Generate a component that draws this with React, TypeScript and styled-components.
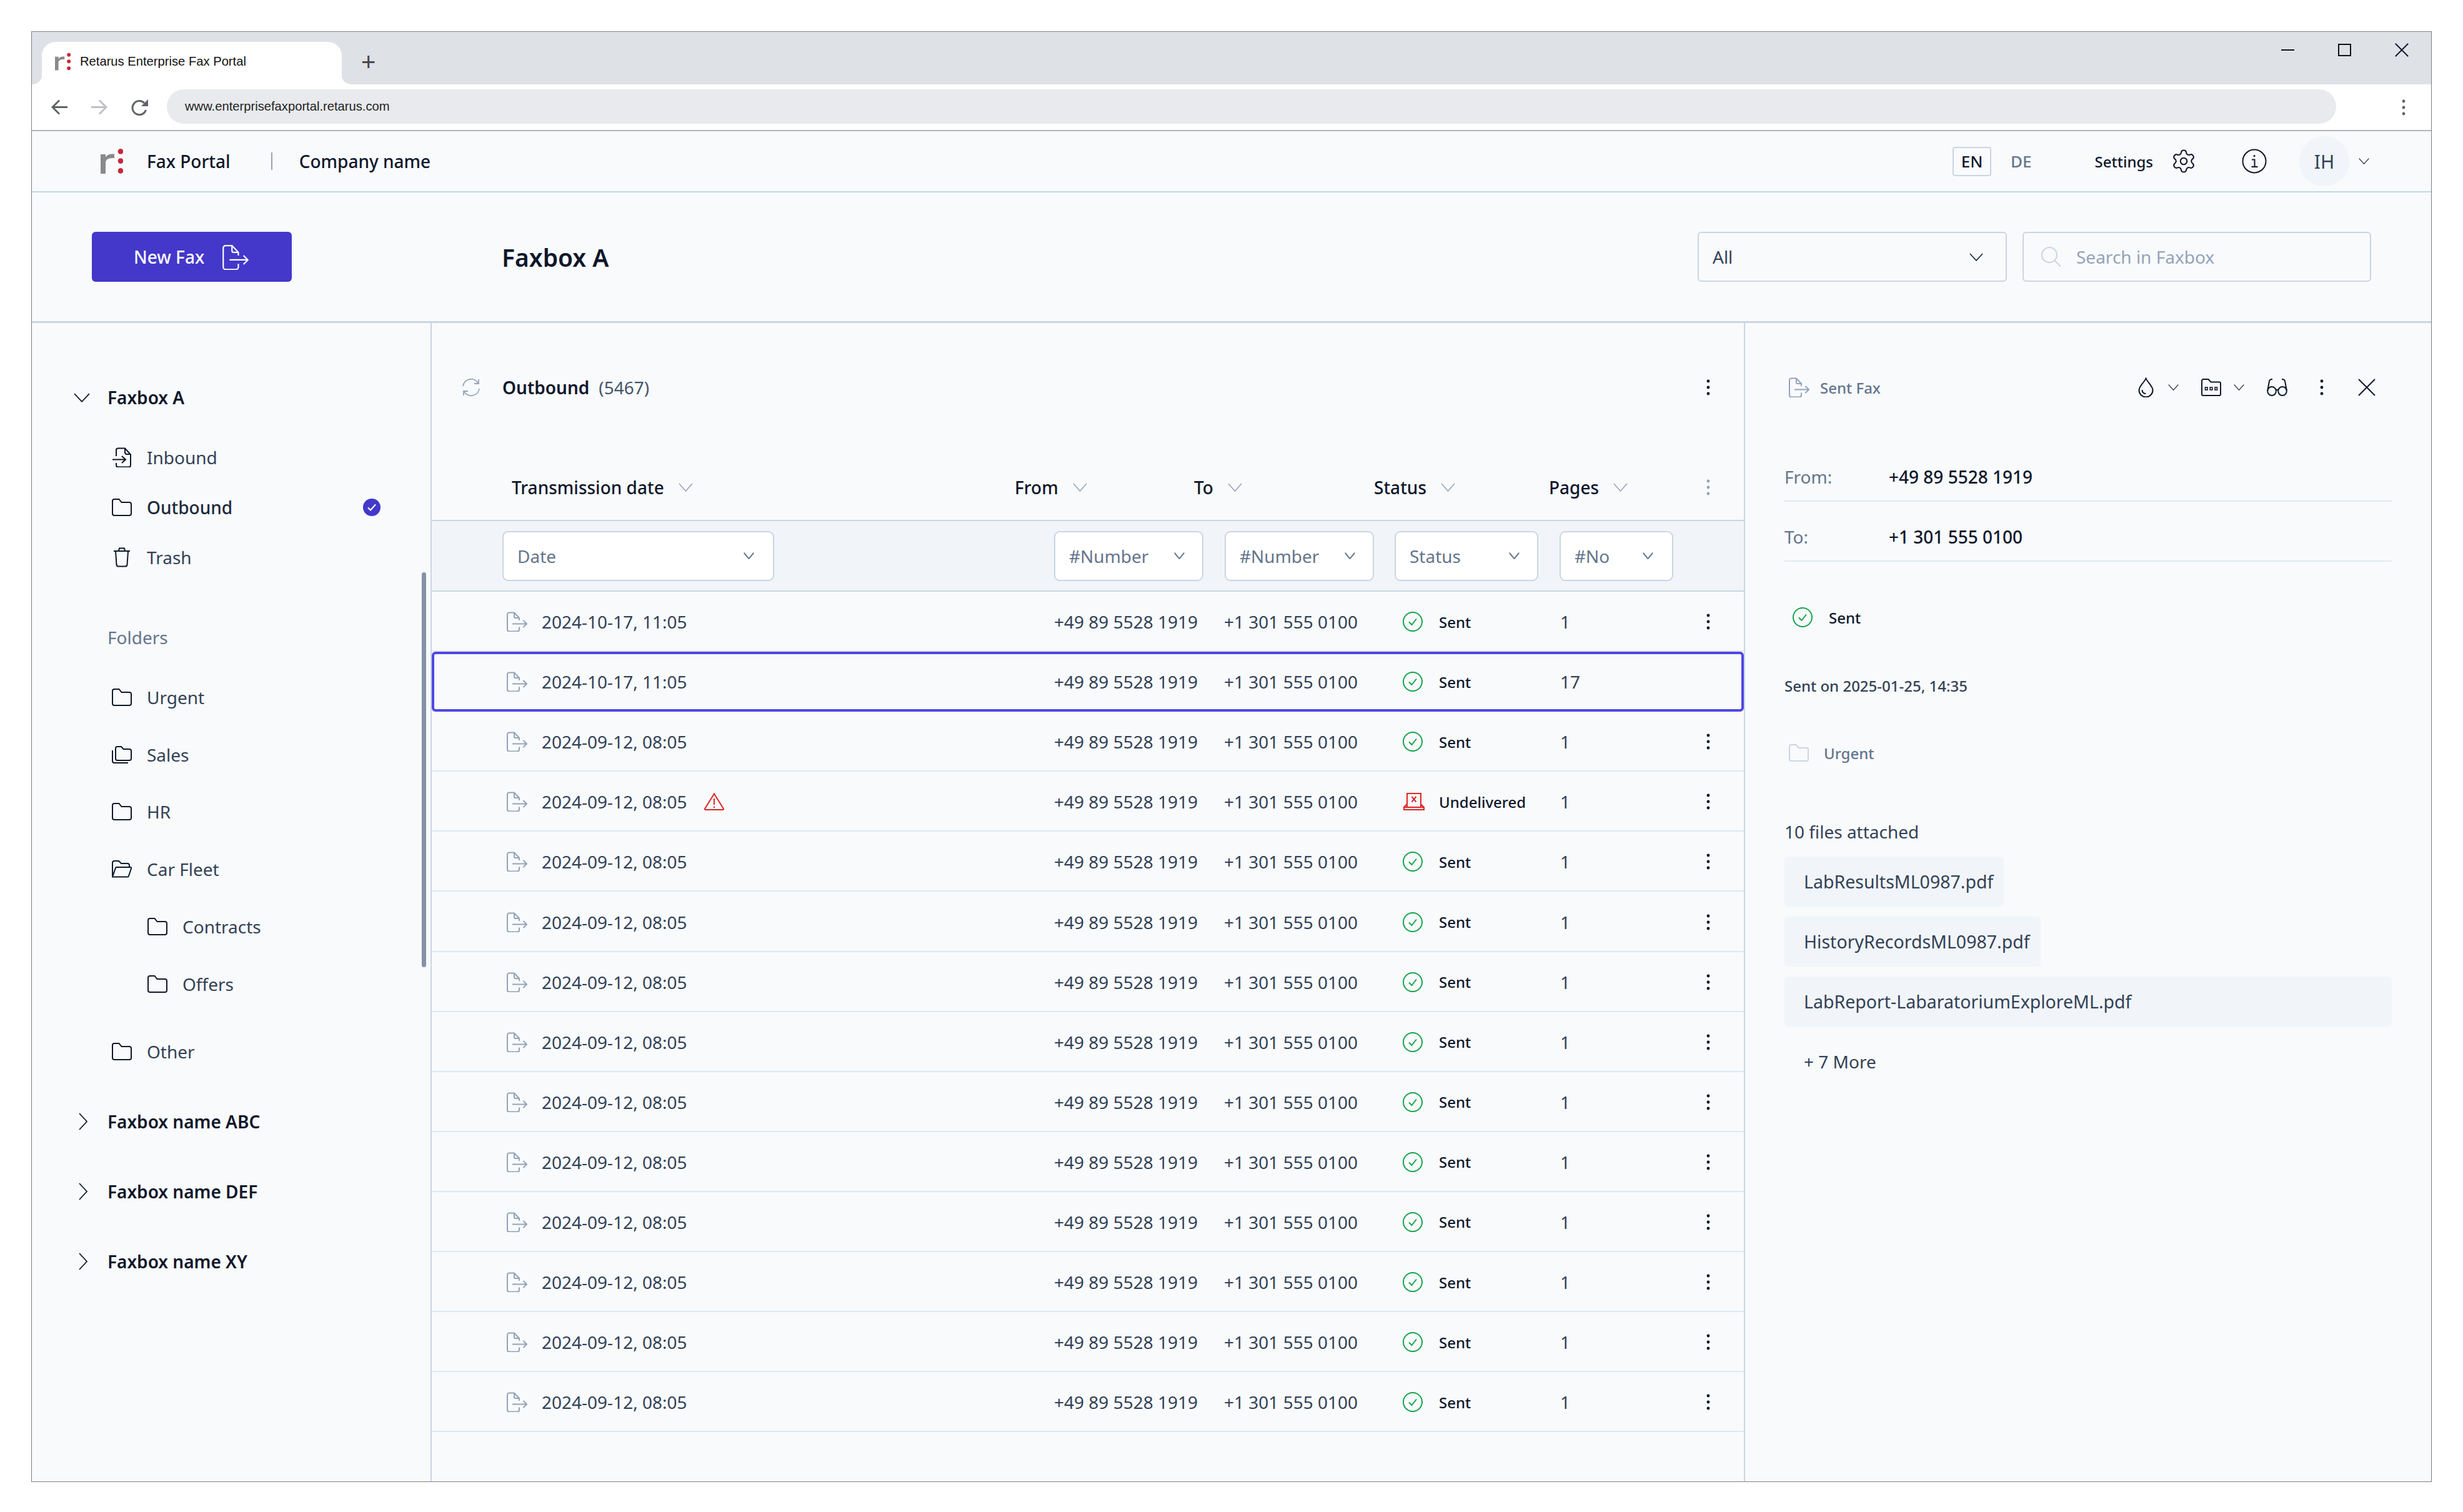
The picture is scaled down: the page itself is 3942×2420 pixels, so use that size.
import React from 'react'
import styled, { createGlobalStyle } from 'styled-components'
import { Settings } from 'lucide-react'

const GlobalStyle = createGlobalStyle`
  html, body { margin: 0; padding: 0; background: #fff; }
  body { font-family: "Noto Sans", sans-serif; color: #334155; }
  * { box-sizing: border-box; }
`

const INK = '#0f172a'
const SLATE = '#94a3b8'

type IconProps = { c?: string; w?: number; h?: number }

const Logo = ({ w = 36, h = 40 }: IconProps) => (
  <svg width={w} height={h} viewBox="0 0 36 40">
    <path d="M0 40V9h8v5c2-4 6-6 14-5.5V15c-8-.5-14 1-14 8v17z" fill="#8a8a8a" />
    <circle cx="32" cy="4.4" r="4.3" fill="#c8283c" />
    <circle cx="32" cy="19.6" r="4.3" fill="#c8283c" />
    <circle cx="32" cy="35.4" r="4.3" fill="#c8283c" />
  </svg>
)

const Chevron = ({ c = INK, w = 24, h = 14, s = 1.6 }: IconProps & { s?: number }) => (
  <svg width={w} height={h} viewBox="0 0 24 14" fill="none" stroke={c} strokeWidth={s} preserveAspectRatio="none">
    <path d="M1 1l11 12L23 1" />
  </svg>
)

const ChevronRight = () => (
  <svg width="16" height="28" viewBox="0 0 16 28" fill="none" stroke={INK} strokeWidth="1.8">
    <path d="M2 1l12 13L2 27" />
  </svg>
)

const SentDoc = ({ c = SLATE, w = 33, h = 32 }: IconProps) => (
  <svg width={w} height={h} viewBox="0 0 33 32" fill="none" stroke={c} strokeWidth="2">
    <path d="M20 14v-4L12 1.5H4a3 3 0 0 0-3 3v24a3 3 0 0 0 3 3h13a3 3 0 0 0 3-3v-4" />
    <path d="M12 1.5V8a2 2 0 0 0 2 2h6" />
    <path d="M9 19.5h23M26.5 14l5.5 5.5-5.5 5.5" />
  </svg>
)

const InboundDoc = () => (
  <svg width="32" height="32" viewBox="0 0 32 32" fill="none" stroke={INK} strokeWidth="2">
    <path d="M7 14V4.5a3 3 0 0 1 3-3h11l9 10v17a3 3 0 0 1-3 3H10a3 3 0 0 1-3-3V25" />
    <path d="M21 1.5V8a3 3 0 0 0 3 3h6" />
    <path d="M1 19.5h21M16 14l6 5.5-6 5.5" />
  </svg>
)

const Folder = ({ c = INK }: IconProps) => (
  <svg width="32" height="28" viewBox="0 0 32 28" fill="none" stroke={c} strokeWidth="2">
    <path d="M1 4a3 3 0 0 1 3-3h7.5l4 5H28a3 3 0 0 1 3 3v15a3 3 0 0 1-3 3H4a3 3 0 0 1-3-3z" />
  </svg>
)

const FolderStack = () => (
  <svg width="32" height="28" viewBox="0 0 32 28" fill="none" stroke={INK} strokeWidth="2">
    <path d="M6 4a3 3 0 0 1 3-3h6l3.5 4H28a3 3 0 0 1 3 3v12a3 3 0 0 1-3 3H9a3 3 0 0 1-3-3z" />
    <path d="M1 7v17a3 3 0 0 0 3 3h22" />
  </svg>
)

const FolderOpen = () => (
  <svg width="32" height="28" viewBox="0 0 32 28" fill="none" stroke={INK} strokeWidth="2">
    <path d="M1 25V4a3 3 0 0 1 3-3h7l4 4h10a3 3 0 0 1 3 3v3" />
    <path d="M1 26.5 6 12a1.5 1.5 0 0 1 1.5-1H30a1.2 1.2 0 0 1 1.2 1.6L27 25a2 2 0 0 1-2 1.5z" />
  </svg>
)

const Trash = () => (
  <svg width="28" height="32" viewBox="0 0 28 32" fill="none" stroke={INK} strokeWidth="2">
    <path d="M1 6h26M9 5.5 10 1.5h8l1 4" />
    <path d="M4 6l1.5 22a3 3 0 0 0 3 2.5h11a3 3 0 0 0 3-2.5L24 6" />
  </svg>
)

const CheckBadge = () => (
  <svg width="28" height="28" viewBox="0 0 28 28" fill="none">
    <circle cx="14" cy="14" r="14" fill="#4338ca" />
    <path d="M8 14.5l4 4 8-9" stroke="#fff" strokeWidth="2.2" />
  </svg>
)

const SentIcon = () => (
  <svg width="32" height="32" viewBox="0 0 32 32" fill="none" stroke="#16a34a" strokeWidth="2">
    <circle cx="16" cy="16" r="15" />
    <path d="M10 16.5l4.5 4.5L22 11.5" />
  </svg>
)

const FailIcon = () => (
  <svg width="36" height="28" viewBox="0 0 36 28" fill="none" stroke="#dc2626" strokeWidth="2">
    <path d="M7 23V1h22v22" />
    <path d="M7 18l-5 5v4h32v-4l-5-5" />
    <path d="M2 23h32" />
    <path d="M14.5 6l7 8.5M21.5 6l-7 8.5" />
  </svg>
)

const Warning = () => (
  <svg width="32" height="28" viewBox="0 0 32 28" fill="none" stroke="#dc2626" strokeWidth="2">
    <path d="M16 1.5 31 25.5a1 1 0 0 1-1 1.5H2a1 1 0 0 1-1-1.5z" />
    <path d="M16 9v10M16 21.5v2.5" />
  </svg>
)

const Kebab = ({ c = INK }: IconProps) => (
  <svg width="6" height="26" viewBox="0 0 6 26" fill={c}>
    <circle cx="3" cy="3" r="2.4" />
    <circle cx="3" cy="13" r="2.4" />
    <circle cx="3" cy="23" r="2.4" />
  </svg>
)

const Refresh = () => (
  <svg width="30" height="30" viewBox="0 0 30 30" fill="none" stroke={SLATE} strokeWidth="1.8">
    <path d="M2 13A13 13 0 0 1 26 8" />
    <path d="M27 2v7h-7" />
    <path d="M28 17A13 13 0 0 1 4 22" />
    <path d="M3 28v-7h7" />
  </svg>
)

const NewFaxIcon = () => (
  <svg width="42" height="41" viewBox="0 0 33 32" fill="none" stroke="#fff" strokeWidth="1.7">
    <path d="M20 14v-4L12 1.5H4a3 3 0 0 0-3 3v24a3 3 0 0 0 3 3h13a3 3 0 0 0 3-3v-4" />
    <path d="M12 1.5V8a2 2 0 0 0 2 2h6" />
    <path d="M9 19.5h23M26.5 14l5.5 5.5-5.5 5.5" />
  </svg>
)

const InfoIcon = () => (
  <svg width="40" height="40" viewBox="0 0 40 40" fill="none" stroke={INK} strokeWidth="2">
    <circle cx="20" cy="20" r="18.5" />
    <path d="M16 17.5h4.5V29M15.5 29h10" />
    <circle cx="20" cy="11.5" r="1.6" fill={INK} stroke="none" />
  </svg>
)

const SearchIcon = () => (
  <svg width="32" height="32" viewBox="0 0 32 32" fill="none" stroke="#cbd5e1" strokeWidth="2">
    <circle cx="13" cy="13" r="12" />
    <path d="M21.5 22 31 31.5" />
  </svg>
)

const Drop = () => (
  <svg width="25" height="32" viewBox="0 0 25 32" fill="none" stroke={INK} strokeWidth="2">
    <path d="M12.5 1.5C10 8 1.5 14 1.5 20.5a11 11 0 0 0 22 0C23.5 14 15 8 12.5 1.5z" />
    <path d="M6.5 20c0 4 2.5 6 6 6" />
  </svg>
)

const FolderDots = () => (
  <svg width="32" height="28" viewBox="0 0 32 28" fill="none" stroke={INK} strokeWidth="2">
    <path d="M1 3.5A2.5 2.5 0 0 1 3.500 1h8l4 4.500H29a2 2 0 0 1 2 2V25a2 2 0 0 1-2 2H3a2 2 0 0 1-2-2z" />
    <rect x="6.5" y="14" width="3.5" height="4" strokeWidth="1.6" />
    <rect x="14.2" y="14" width="3.5" height="4" strokeWidth="1.6" />
    <rect x="22" y="14" width="3.5" height="4" strokeWidth="1.6" />
  </svg>
)

const Glasses = () => (
  <svg width="33" height="28" viewBox="0 0 33 28" fill="none" stroke={INK} strokeWidth="2">
    <ellipse cx="8" cy="20" rx="6.8" ry="7" />
    <ellipse cx="25" cy="20" rx="6.8" ry="7" />
    <path d="M14.5 18.5c1.500-1 2.500-1 4 0" />
    <path d="M1.2 19 4 4c.3-2 2-3 5-3" />
    <path d="M31.8 19 29 4c-.3-2-2-3-5-3" />
  </svg>
)

const CloseX = ({ w = 28, h = 28, s = 2 }: IconProps & { s?: number }) => (
  <svg width={w} height={h} viewBox="0 0 28 28" fill="none" stroke={INK} strokeWidth={s}>
    <path d="M1 1l26 26M27 1 1 27" />
  </svg>
)

const ArrowBack = ({ c = '#5f6368', flip = false }: IconProps & { flip?: boolean }) => (
  <svg width="26" height="25" viewBox="0 0 26 25" fill="none" stroke={c} strokeWidth="3" style={flip ? { transform: 'scaleX(-1)' } : undefined}>
    <path d="M26 12.5H3M13 1.5 2 12.5l11 11" />
  </svg>
)

const Reload = () => (
  <svg width="28" height="26" viewBox="0 0 28 26" fill="none">
    <path d="M23.5 17A11 11 0 1 1 21 6" stroke="#5f6368" strokeWidth="3" />
    <path d="M27 0v11H16z" fill="#5f6368" />
  </svg>
)

const Page = styled.div`
  width: 3942px;
  height: 2420px;
  padding: 50px 50px 48px;
`

const BrowserWindow = styled.div`
  height: 100%;
  display: flex;
  flex-direction: column;
  border: 1px solid #808080;
  background: #f8fafc;
  overflow: hidden;
`

const TabStrip = styled.div`
  height: 84px;
  flex: none;
  display: flex;
  align-items: flex-end;
  padding-left: 16px;
  background: #dee1e6;
`

const Tab = styled.div`
  position: relative;
  width: 480px;
  height: 68px;
  display: flex;
  align-items: center;
  gap: 15px;
  padding: 0 0 6px 21px;
  background: #fff;
  border-radius: 22px 22px 0 0;
  font: 400 20.2px "Liberation Sans", sans-serif;
  color: #111;

  &::before, &::after {
    content: "";
    position: absolute;
    bottom: 0;
    width: 16px;
    height: 16px;
    background: #fff;
  }
  &::before { left: -15px; -webkit-mask: radial-gradient(circle at 0 0, transparent 15.5px, #000 16px); }
  &::after { right: -15px; -webkit-mask: radial-gradient(circle at 100% 0, transparent 15.5px, #000 16px); }
`

const NewTab = styled.div`
  margin: 12px 0 0 31px;
  align-self: center;
  font: 400 40px "Liberation Sans", sans-serif;
  line-height: 40px;
  color: #45484d;
`

const WindowButtons = styled.div`
  margin-left: auto;
  align-self: flex-start;
  height: 57px;
  display: flex;
  align-items: center;
  gap: 70px;
  padding-right: 36px;
`

const MinimizeBar = styled.span`
  width: 21px;
  height: 2px;
  background: #111;
`

const MaximizeBox = styled.span`
  width: 21px;
  height: 20px;
  border: 2px solid #111;
`

const AddressRow = styled.div`
  height: 75px;
  flex: none;
  display: flex;
  align-items: center;
  padding: 0 41px 0 31px;
  background: #fff;
  border-bottom: 2px solid #b5b5b5;
`

const NavIcons = styled.div`
  display: flex;
  align-items: center;
  gap: 38px;
  width: 185px;
`

const UrlPill = styled.div`
  flex: 1;
  height: 55px;
  margin-bottom: 2px;
  display: flex;
  align-items: center;
  padding-left: 29px;
  border-radius: 28px;
  background: #e8eaed;
  font: 400 20.2px "Liberation Sans", sans-serif;
  color: #222;
`

const BrowserMenu = styled.div`
  margin-left: 105px;
  display: flex;
`

const AppHeader = styled.header`
  height: 98px;
  flex: none;
  display: flex;
  align-items: center;
  padding: 0 99px 0 110px;
  border-bottom: 2px solid #cbd5e1;
`

const Brand = styled.div`
  display: flex;
  align-items: center;
  font-size: 28px;
  font-weight: 500;
  color: ${INK};
`

const BrandName = styled.span`
  margin-left: 38px;
`

const BrandRule = styled.span`
  width: 2px;
  height: 28px;
  margin: 0 43px 0 65px;
  background: #94a3b8;
`

const HeaderTools = styled.div`
  margin-left: auto;
  display: flex;
  align-items: center;
`

const LangOn = styled.span`
  width: 62px;
  height: 47px;
  display: flex;
  align-items: center;
  justify-content: center;
  border: 2px solid #cbd5e1;
  border-radius: 4px;
  font-size: 26px;
  font-weight: 500;
  color: ${INK};
`

const LangOff = styled.span`
  margin: 0 101px 0 31px;
  font-size: 26px;
  font-weight: 500;
  color: #64748b;
`

const SettingsLabel = styled.span`
  margin-right: 28px;
  font-size: 24px;
  font-weight: 500;
  color: ${INK};
`

const InfoWrap = styled.span`
  display: flex;
  margin: 0 52px 0 72px;
`

const Avatar = styled.span`
  width: 80px;
  height: 80px;
  display: flex;
  align-items: center;
  justify-content: center;
  border-radius: 50%;
  background: #f1f5f9;
  font-size: 30px;
  color: #334155;
`

const AvatarCaret = styled.span`
  display: flex;
  margin-left: 15px;
`

const Toolbar = styled.div`
  height: 209px;
  flex: none;
  display: flex;
  align-items: center;
  padding: 0 96px 0 96px;
  border-bottom: 3px solid #cbd5e1;
`

const NewFaxButton = styled.button`
  width: 320px;
  height: 80px;
  display: flex;
  align-items: center;
  gap: 29px;
  padding: 0 0 0 67px;
  border: none;
  border-radius: 6px;
  background: #4338ca;
  color: #fff;
  font: 500 28px "Noto Sans", sans-serif;
`

const PageTitle = styled.h1`
  margin: 0 0 0 336px;
  font-size: 39px;
  font-weight: 600;
  color: ${INK};
`

const Field = styled.div<{ $w: number }>`
  width: ${p => p.$w}px;
  height: 80px;
  display: flex;
  align-items: center;
  border: 2px solid #cbd5e1;
  border-radius: 6px;
  font-size: 28px;
`

const SelectField = styled(Field)`
  margin-left: auto;
  justify-content: space-between;
  padding: 0 36px 0 22px;
  color: #334155;
`

const SearchField = styled(Field)`
  margin-left: 25px;
  gap: 24px;
  padding-left: 28px;
  color: #94a3b8;
`

const Body = styled.div`
  flex: 1;
  min-height: 0;
  display: flex;
`

const Sidebar = styled.aside`
  position: relative;
  width: 640px;
  flex: none;
  padding-top: 79px;
  border-right: 2px solid #cbd5e1;
`

const SideScroll = styled.span`
  position: absolute;
  top: 399px;
  right: 7px;
  width: 7px;
  height: 632px;
  border-radius: 4px;
  background: #8492a6;
`

const FaxboxRow = styled.div<{ $h: number }>`
  height: ${p => p.$h}px;
  display: flex;
  align-items: center;
  padding-left: 67px;
  font-size: 28px;
  font-weight: 600;
  color: ${INK};
`

const CaretSlot = styled.span<{ $inset?: number }>`
  width: 54px;
  display: flex;
  padding-left: ${p => p.$inset ?? 0}px;
`

const NavGroup = styled.div<{ $top: number }>`
  margin-top: ${p => p.$top}px;
`

const NavItem = styled.div<{ $h: number; $nest?: boolean; $active?: boolean }>`
  height: ${p => p.$h}px;
  display: flex;
  align-items: center;
  gap: 24px;
  padding-left: ${p => (p.$nest ? 185 : 128)}px;
  font-size: 28px;
  font-weight: ${p => (p.$active ? 500 : 400)};
  color: ${p => (p.$active ? '#1e293b' : '#334155')};
`

const NavBadge = styled.span`
  display: flex;
  margin-left: auto;
  margin-right: 80px;
`

const NavIconSlot = styled.span`
  width: 32px;
  display: flex;
  justify-content: center;
`

const FoldersLabel = styled.div`
  height: 80px;
  display: flex;
  align-items: center;
  margin-top: 48px;
  padding-left: 121px;
  font-size: 28px;
  color: #64748b;
`

const ListPanel = styled.main`
  width: 2102px;
  flex: none;
  border-right: 2px solid #cbd5e1;
`

const ListTitle = styled.div`
  height: 206px;
  display: flex;
  align-items: center;
  padding: 0 54px 0 48px;
  font-size: 28px;
`

const ListName = styled.span`
  margin-left: 35px;
  font-weight: 600;
  color: ${INK};
`

const ListCount = styled.span`
  margin-left: 15px;
  color: #475569;
`

const ListMenu = styled.span`
  display: flex;
  margin-left: auto;
`

const HeadRow = styled.div`
  height: 111px;
  display: grid;
  grid-template-columns: 805px 287px 288px 280px 1fr 6px;
  align-items: center;
  padding: 4px 54px 0 128px;
  border-bottom: 2px solid #cbd5e1;
`

const HeadCell = styled.div`
  display: flex;
  align-items: center;
  gap: 23px;
  font-size: 28px;
  font-weight: 500;
  color: ${INK};
`

const FilterRow = styled.div`
  height: 113px;
  display: grid;
  grid-template-columns: 883px 273px 272px 264px 182px;
  align-items: center;
  padding: 0 0 0 113px;
  background: #f1f5f9;
  border-bottom: 2px solid #cbd5e1;
`

const FilterBox = styled.div<{ $w: number; $pad: number }>`
  width: ${p => p.$w}px;
  height: 80px;
  display: flex;
  align-items: center;
  justify-content: space-between;
  padding: 0 ${p => p.$pad}px 0 22px;
  background: #fff;
  border: 2px solid #cbd5e1;
  border-radius: 9px;
  font-size: 28px;
  color: #64748b;
`

const Row = styled.div<{ $selected?: boolean }>`
  height: 96.1px;
  display: grid;
  grid-template-columns: 876px 272px 286px 252px 1fr 6px;
  align-items: center;
  padding: 2px 54px 0 120px;
  font-size: 28px;
  border-bottom: 2px solid #e2e8f0;
  ${p => p.$selected && `
    border: 4px solid #4f46e5;
    border-radius: 6px;
    padding: 0 50px 0 116px;
  `}
`

const DateCell = styled.div`
  display: flex;
  align-items: center;
  gap: 23px;
`

const DateAlert = styled.span`
  display: flex;
  margin-left: 4px;
`

const StatusCell = styled.div`
  display: flex;
  align-items: center;
  font-size: 24px;
  font-weight: 500;
  color: ${INK};
`

const StatusSlot = styled.span`
  width: 58px;
  display: flex;
`

const RowMenu = styled.span`
  display: flex;
`

const Detail = styled.section`
  flex: 1;
  min-width: 0;
  padding: 0 63px;
`

const DetailBar = styled.div`
  height: 190px;
  display: flex;
  align-items: center;
  padding: 16px 26px 0 7px;
`

const DetailKind = styled.span`
  display: flex;
  align-items: center;
  gap: 17px;
  font-size: 24px;
  font-weight: 500;
  color: #64748b;
`

const DetailTools = styled.div`
  margin-left: auto;
  display: flex;
  align-items: center;
`

const ToolChevron = styled.span<{ $left: number }>`
  display: flex;
  margin: 0 36px 0 ${p => p.$left}px;
`

const ToolKebab = styled.span`
  display: flex;
  margin: 0 55px 0 52px;
`

const InfoLine = styled.div`
  height: 96px;
  display: flex;
  align-items: center;
  padding-top: 18px;
  border-bottom: 2px solid #e2e8f0;
  font-size: 28px;
`

const InfoLabel = styled.span`
  width: 167px;
  color: #64748b;
`

const InfoValue = styled.span`
  font-weight: 500;
  color: ${INK};
`

const DetailStatus = styled.div`
  height: 178px;
  display: flex;
  align-items: center;
  gap: 26px;
  padding-left: 13px;
  font-size: 24px;
  font-weight: 500;
  color: ${INK};
`

const SentOn = styled.div`
  height: 40px;
  display: flex;
  align-items: center;
  font-size: 24px;
  font-weight: 500;
  color: #334155;
`

const TagLine = styled.div`
  height: 40px;
  margin-top: 68px;
  display: flex;
  align-items: center;
  gap: 24px;
  padding-left: 7px;
  font-size: 24px;
  font-weight: 500;
  color: #64748b;
`

const FilesLabel = styled.div`
  height: 40px;
  margin-top: 86px;
  display: flex;
  align-items: center;
  font-size: 28px;
  color: #334155;
`

const FileList = styled.div`
  margin-top: 20px;
  display: flex;
  flex-direction: column;
  align-items: flex-start;
  gap: 16px;
`

const FileChip = styled.div<{ $wide?: boolean }>`
  height: 80px;
  width: ${p => (p.$wide ? '100%' : 'auto')};
  display: flex;
  align-items: center;
  padding: 0 17px 0 31px;
  border-radius: 6px;
  background: #f1f5f9;
  font-size: 28.5px;
  color: #334155;
`

const MoreFiles = styled.div`
  height: 80px;
  display: flex;
  align-items: center;
  padding-left: 31px;
  font-size: 28px;
  color: #334155;
`

type FaxRow = {
  date: string
  pages: string
  failed?: boolean
  selected?: boolean
}

const rows: FaxRow[] = [
  { date: '2024-10-17, 11:05', pages: '1' },
  { date: '2024-10-17, 11:05', pages: '17', selected: true },
  { date: '2024-09-12, 08:05', pages: '1' },
  { date: '2024-09-12, 08:05', pages: '1', failed: true },
  ...Array.from({ length: 10 }, () => ({ date: '2024-09-12, 08:05', pages: '1' })),
]

const columns = ['Transmission date', 'From', 'To', 'Status', 'Pages']

const filters = [
  { label: 'Date', w: 435, pad: 30 },
  { label: '#Number', w: 239, pad: 28 },
  { label: '#Number', w: 239, pad: 28 },
  { label: 'Status', w: 230, pad: 28 },
  { label: '#No', w: 182, pad: 30 },
]

const folders = [
  { label: 'Urgent', icon: <Folder /> },
  { label: 'Sales', icon: <FolderStack /> },
  { label: 'HR', icon: <Folder /> },
  { label: 'Car Fleet', icon: <FolderOpen /> },
  { label: 'Contracts', icon: <Folder />, nest: true },
  { label: 'Offers', icon: <Folder />, nest: true },
]

const App = () => {
  return (
    <Page>
      <GlobalStyle />
      <BrowserWindow>
        <TabStrip>
          <Tab>
            <Logo w={25} h={29} />
            Retarus Enterprise Fax Portal
          </Tab>
          <NewTab>+</NewTab>
          <WindowButtons>
            <MinimizeBar />
            <MaximizeBox />
            <CloseX w={22} h={22} s={2.4} />
          </WindowButtons>
        </TabStrip>
        <AddressRow>
          <NavIcons>
            <ArrowBack />
            <ArrowBack c="#bdc1c6" flip />
            <Reload />
          </NavIcons>
          <UrlPill>www.enterprisefaxportal.retarus.com</UrlPill>
          <BrowserMenu>
            <Kebab c="#5f6368" />
          </BrowserMenu>
        </AddressRow>

        <AppHeader>
          <Brand>
            <Logo />
            <BrandName>Fax Portal</BrandName>
            <BrandRule />
            Company name
          </Brand>
          <HeaderTools>
            <LangOn>EN</LangOn>
            <LangOff>DE</LangOff>
            <SettingsLabel>Settings</SettingsLabel>
            <Settings size={42} strokeWidth={1.2} color={INK} />
            <InfoWrap>
              <InfoIcon />
            </InfoWrap>
            <Avatar>IH</Avatar>
            <AvatarCaret>
              <Chevron w={17} h={10} />
            </AvatarCaret>
          </HeaderTools>
        </AppHeader>

        <Toolbar>
          <NewFaxButton>
            New Fax
            <NewFaxIcon />
          </NewFaxButton>
          <PageTitle>Faxbox A</PageTitle>
          <SelectField $w={495}>
            All
            <Chevron w={22} h={13} />
          </SelectField>
          <SearchField $w={558}>
            <SearchIcon />
            Search in Faxbox
          </SearchField>
        </Toolbar>

        <Body>
          <Sidebar>
            <FaxboxRow $h={80}>
              <CaretSlot>
                <Chevron w={26} h={15} />
              </CaretSlot>
              Faxbox A
            </FaxboxRow>
            <NavGroup $top={16}>
              <NavItem $h={80}>
                <NavIconSlot><InboundDoc /></NavIconSlot>
                Inbound
              </NavItem>
              <NavItem $h={80} $active>
                <NavIconSlot><Folder /></NavIconSlot>
                Outbound
                <NavBadge><CheckBadge /></NavBadge>
              </NavItem>
              <NavItem $h={80}>
                <NavIconSlot><Trash /></NavIconSlot>
                Trash
              </NavItem>
            </NavGroup>
            <FoldersLabel>Folders</FoldersLabel>
            <NavGroup $top={10}>
              {folders.map(f => (
                <NavItem key={f.label} $h={91.8} $nest={f.nest}>
                  <NavIconSlot>{f.icon}</NavIconSlot>
                  {f.label}
                </NavItem>
              ))}
            </NavGroup>
            <NavGroup $top={16}>
              <NavItem $h={92}>
                <NavIconSlot><Folder /></NavIconSlot>
                Other
              </NavItem>
            </NavGroup>
            <NavGroup $top={10}>
              {['Faxbox name ABC', 'Faxbox name DEF', 'Faxbox name XY'].map(name => (
                <FaxboxRow key={name} $h={112}>
                  <CaretSlot $inset={7}><ChevronRight /></CaretSlot>
                  {name}
                </FaxboxRow>
              ))}
            </NavGroup>
            <SideScroll />
          </Sidebar>

          <ListPanel>
            <ListTitle>
              <Refresh />
              <ListName>Outbound</ListName>
              <ListCount>(5467)</ListCount>
              <ListMenu><Kebab /></ListMenu>
            </ListTitle>
            <HeadRow>
              {columns.map(label => (
                <HeadCell key={label}>
                  {label}
                  <Chevron c={SLATE} w={23} h={14} />
                </HeadCell>
              ))}
              <Kebab c={SLATE} />
            </HeadRow>
            <FilterRow>
              {filters.map((f, i) => (
                <FilterBox key={i} $w={f.w} $pad={f.pad}>
                  {f.label}
                  <Chevron c="#64748b" w={17} h={11} s={2.6} />
                </FilterBox>
              ))}
            </FilterRow>
            {rows.map((row, i) => (
              <Row key={i} $selected={row.selected}>
                <DateCell>
                  <SentDoc />
                  {row.date}
                  {row.failed && <DateAlert><Warning /></DateAlert>}
                </DateCell>
                <div>+49 89 5528 1919</div>
                <div>+1 301 555 0100</div>
                <StatusCell>
                  <StatusSlot>{row.failed ? <FailIcon /> : <SentIcon />}</StatusSlot>
                  {row.failed ? 'Undelivered' : 'Sent'}
                </StatusCell>
                <div>{row.pages}</div>
                {!row.selected && <RowMenu><Kebab /></RowMenu>}
              </Row>
            ))}
          </ListPanel>

          <Detail>
            <DetailBar>
              <DetailKind>
                <SentDoc />
                Sent Fax
              </DetailKind>
              <DetailTools>
                <Drop />
                <ToolChevron $left={23}><Chevron w={17} h={10} /></ToolChevron>
                <FolderDots />
                <ToolChevron $left={20}><Chevron w={17} h={10} /></ToolChevron>
                <Glasses />
                <ToolKebab><Kebab /></ToolKebab>
                <CloseX />
              </DetailTools>
            </DetailBar>
            <InfoLine>
              <InfoLabel>From:</InfoLabel>
              <InfoValue>+49 89 5528 1919</InfoValue>
            </InfoLine>
            <InfoLine>
              <InfoLabel>To:</InfoLabel>
              <InfoValue>+1 301 555 0100</InfoValue>
            </InfoLine>
            <DetailStatus>
              <SentIcon />
              Sent
            </DetailStatus>
            <SentOn>Sent on 2025-01-25, 14:35</SentOn>
            <TagLine>
              <Folder c="#cbd5e1" />
              Urgent
            </TagLine>
            <FilesLabel>10 files attached</FilesLabel>
            <FileList>
              <FileChip>LabResultsML0987.pdf</FileChip>
              <FileChip>HistoryRecordsML0987.pdf</FileChip>
              <FileChip $wide>LabReport-LabaratoriumExploreML.pdf</FileChip>
              <MoreFiles>+ 7 More</MoreFiles>
            </FileList>
          </Detail>
        </Body>
      </BrowserWindow>
    </Page>
  )
}

export default App
